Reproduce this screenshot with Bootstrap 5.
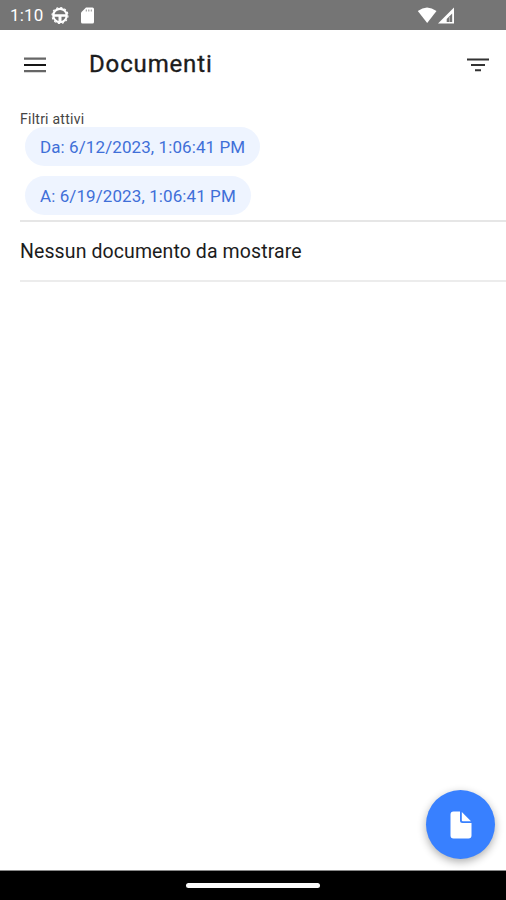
<!DOCTYPE html>
<html lang="it">
<head>
<meta charset="utf-8">
<meta name="viewport" content="width=device-width, initial-scale=1">
<title>Documenti</title>
<link href="https://cdn.jsdelivr.net/npm/bootstrap@5.3.0/dist/css/bootstrap.min.css" rel="stylesheet">
<style>
body{font-family:Roboto,"Liberation Sans",sans-serif;color:#1c1c1c;height:900px;overflow:hidden}
svg{display:block;flex:none}
.status-bar{height:30px;background:#757575;padding:0 51px 0 10px;font-size:17px;line-height:32px}
.clock{width:40px;letter-spacing:.2px}
.top-bar{height:69px;padding:0 16px 0 23px}
.page-title{font-size:24px;font-weight:400;line-height:32px;margin:-1px 0 0 42px;letter-spacing:.85px;-webkit-text-stroke:.35px #1c1c1c}
.filters{margin-left:20px;height:123px;padding-top:11px;border-bottom:2px solid #e6e6e6}
.filters-label{font-size:14px;line-height:18px;height:17px;color:#444;letter-spacing:.25px}
.chip{height:39px;border-radius:20px;background:#eef4ff;color:#3f6fd8;font-size:17px;line-height:40px;padding:0 15px;margin-left:5px;white-space:nowrap;letter-spacing:.09px}
.chip + .chip{margin-top:10px}
.empty-row{margin-left:20px;height:60px;border-bottom:2px solid #ececec;font-size:19.5px;line-height:59px;letter-spacing:.1px}
.fab{width:69px;height:69px;background:#3880ff;margin:0 11px 11px auto;box-shadow:0 3px 9px rgba(0,0,0,.32)}
.nav-area{height:30px;background:#000;border-top:1px solid #888}
.home-pill{width:134px;height:5px;border-radius:3px;background:#fafafa}
</style>
</head>
<body class="d-flex flex-column bg-white">
<header>
  <div class="status-bar d-flex align-items-center text-white">
    <span class="clock">1:10</span>
    <svg width="20" height="20" viewBox="0 0 20 20"><circle cx="10" cy="10.500" r="6.700" fill="none" stroke="#fff" stroke-width="2.200"/><circle cx="10" cy="10.500" r="8" fill="none" stroke="#fff" stroke-width="1.100" stroke-dasharray="2.100 2.090"/><path d="M3 9.200h14v2.500h-5.500V17h-3v-5.300H3z" fill="#fff"/></svg>
    <svg class="ms-2" width="20" height="20" viewBox="0 0 20 20"><path d="M8 2.500h6.500A1.500 1.500 0 0 1 16 4v13a1.500 1.500 0 0 1-1.500 1.500h-10A1.500 1.500 0 0 1 3 17V7.500z" fill="#fff"/><path d="M8.300 4.500v2M10.800 4.500v2M13.300 4.500v2" stroke="#999" stroke-width="1.100"/></svg>
    <svg class="ms-auto" width="38" height="20" viewBox="0 0 38 20"><path d="M.8 6Q10 -1 19.500 6L10.200 18z" fill="#fff"/><path d="M37 2.500v16H21z" fill="#fff"/><path d="M35.200 8.500v8.500h-5.500v-3z" fill="#757575"/><path d="M32.500 12v5" stroke="#aaa"/></svg>
  </div>
  <nav class="top-bar d-flex align-items-center">
    <svg width="24" height="24" viewBox="0 0 24 24" aria-label="Menu"><path d="M1 5.700h22M1 18.200h22" stroke="#666" stroke-width="2.300"/><path d="M1 12h22" stroke="#161616" stroke-width="2"/></svg>
    <h1 class="page-title">Documenti</h1>
    <svg class="ms-auto" width="24" height="24" viewBox="0 0 24 24" aria-label="Filtri"><path d="M1 6.500h22M5 12h14M9 17.300h6" stroke="#333" stroke-width="1.900"/></svg>
  </nav>
</header>
<main class="flex-grow-1 d-flex flex-column">
  <section class="filters d-flex flex-column align-items-start">
    <div class="filters-label">Filtri attivi</div>
    <span class="chip">Da: 6/12/2023, 1:06:41 PM</span>
    <span class="chip">A: 6/19/2023, 1:06:41 PM</span>
  </section>
  <div class="empty-row">Nessun documento da mostrare</div>
  <button class="fab btn rounded-circle border-0 p-0 mt-auto d-flex align-items-center justify-content-center" aria-label="Nuovo documento">
    <svg width="24" height="30" viewBox="0 0 24 30"><path d="M4.500 1.500H11v9a2.500 2.500 0 0 0 2.500 2.500h9v12.500a3 3 0 0 1-3 3h-15a3 3 0 0 1-3-3v-21a3 3 0 0 1 3-3z" fill="#fff"/><path d="M12.800 2l9.200 9.300h-8.200a1 1 0 0 1-1-1z" fill="#fff"/></svg>
  </button>
</main>
<footer class="nav-area d-flex align-items-center justify-content-center"><div class="home-pill"></div></footer>
<script src="https://cdn.jsdelivr.net/npm/bootstrap@5.3.0/dist/js/bootstrap.bundle.min.js"></script>
</body>
</html>
